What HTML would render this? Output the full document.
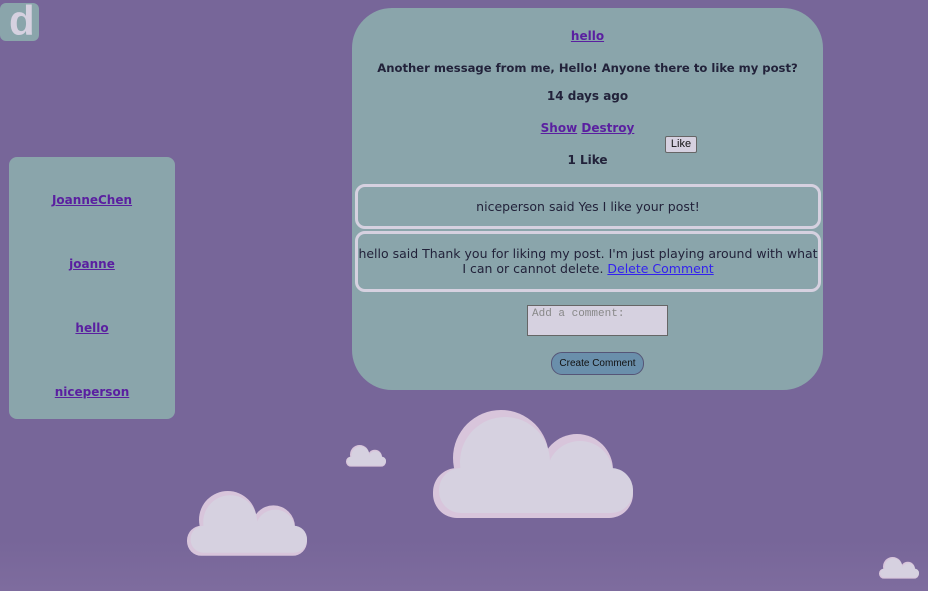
<!DOCTYPE html>
<html><head><style>
body{margin:0;width:928px;height:591px;overflow:hidden;background:linear-gradient(#776699 0,#776699 540px,#7e6c9e 591px);font-family:"DejaVu Sans","Liberation Sans",sans-serif;position:relative;color:#22223a}
.a{position:absolute}
a{color:#5a1fa0;font-weight:bold}
.c{text-align:center;font-weight:bold;font-size:12px}
.box{position:absolute;left:355px;width:460px;border:3px solid #d6d1e0;border-radius:10px;text-align:center;font-size:12.5px}
</style></head><body>
<div class="a" style="left:0;top:3px;width:39px;height:38px;background:#8aa5ab;border-radius:6px"></div>
<div class="a" style="left:9px;top:-3px;font:bold 42px 'Liberation Sans',sans-serif;color:#d6d1e0">d</div>

<div class="a" style="left:9px;top:157px;width:166px;height:262px;background:#8aa5ab;border-radius:8px"></div>
<div class="a c" style="left:9px;width:166px;top:193px"><a href="#">JoanneChen</a></div>
<div class="a c" style="left:9px;width:166px;top:257px"><a href="#">joanne</a></div>
<div class="a c" style="left:9px;width:166px;top:321px"><a href="#">hello</a></div>
<div class="a c" style="left:9px;width:166px;top:385px"><a href="#">niceperson</a></div>

<div class="a" style="left:352px;top:8px;width:471px;height:382px;background:#8aa5ab;border-radius:40px"></div>
<div class="a c" style="left:352px;width:471px;top:29px"><a href="#">hello</a></div>
<div class="a c" style="left:352px;width:471px;top:61px;font-size:11.6px">Another message from me, Hello! Anyone there to like my post?</div>
<div class="a c" style="left:352px;width:471px;top:89px">14 days ago</div>
<div class="a c" style="left:352px;width:471px;top:121px"><a href="#">Show</a> <a href="#">Destroy</a></div>
<div class="a" style="left:665px;top:136px;width:30px;height:15px;background:#d6d1e0;border:1px solid #666;border-radius:2px;font:11px 'Liberation Sans',sans-serif;text-align:center;line-height:15px;color:#111">Like</div>
<div class="a c" style="left:352px;width:471px;top:153px">1 Like</div>
<div class="box" style="top:184px;height:39px;line-height:40px">niceperson said Yes I like your post!</div>
<div class="box" style="top:231px;height:55px;line-height:15px"><div style="margin-top:12px">hello said Thank you for liking my post. I'm just playing around with what I can or cannot delete. <a href="#" style="color:#3322ee;font-weight:normal">Delete Comment</a></div></div>
<div class="a" style="left:527px;top:305px;background:#d6d1e0;border:1px solid #666;font:11px 'Liberation Mono',monospace;color:#888;padding:2px 4px;box-sizing:border-box;width:141px;height:31px">Add a comment:</div>
<div class="a" style="left:551px;top:352px;width:91px;height:21px;background:#6a8fab;border:1px solid #557;border-radius:11px;font:10px 'Liberation Sans',sans-serif;text-align:center;line-height:21px;color:#111">Create Comment</div>

<svg class="a" style="left:0;top:0" width="928" height="591">
<defs><g id="cl">
<rect x="0" y="58" width="200" height="50" rx="24" fill="#d8c5db"/>
<circle cx="68" cy="48" r="48" fill="#d8c5db"/>
<circle cx="144" cy="60" r="36" fill="#d8c5db"/>
<circle cx="72" cy="52" r="45" fill="#d6d1e0"/>
<circle cx="147" cy="64" r="33" fill="#d6d1e0"/>
<rect x="6" y="58" width="194" height="45" rx="22" fill="#d6d1e0"/>
</g></defs>
<use href="#cl" transform="translate(433,410)"/>
<use href="#cl" transform="translate(187,491) scale(0.6)"/>
<use href="#cl" transform="translate(346,445) scale(0.2)"/>
<use href="#cl" transform="translate(879,557) scale(0.2)"/>
</svg>
</body></html>
